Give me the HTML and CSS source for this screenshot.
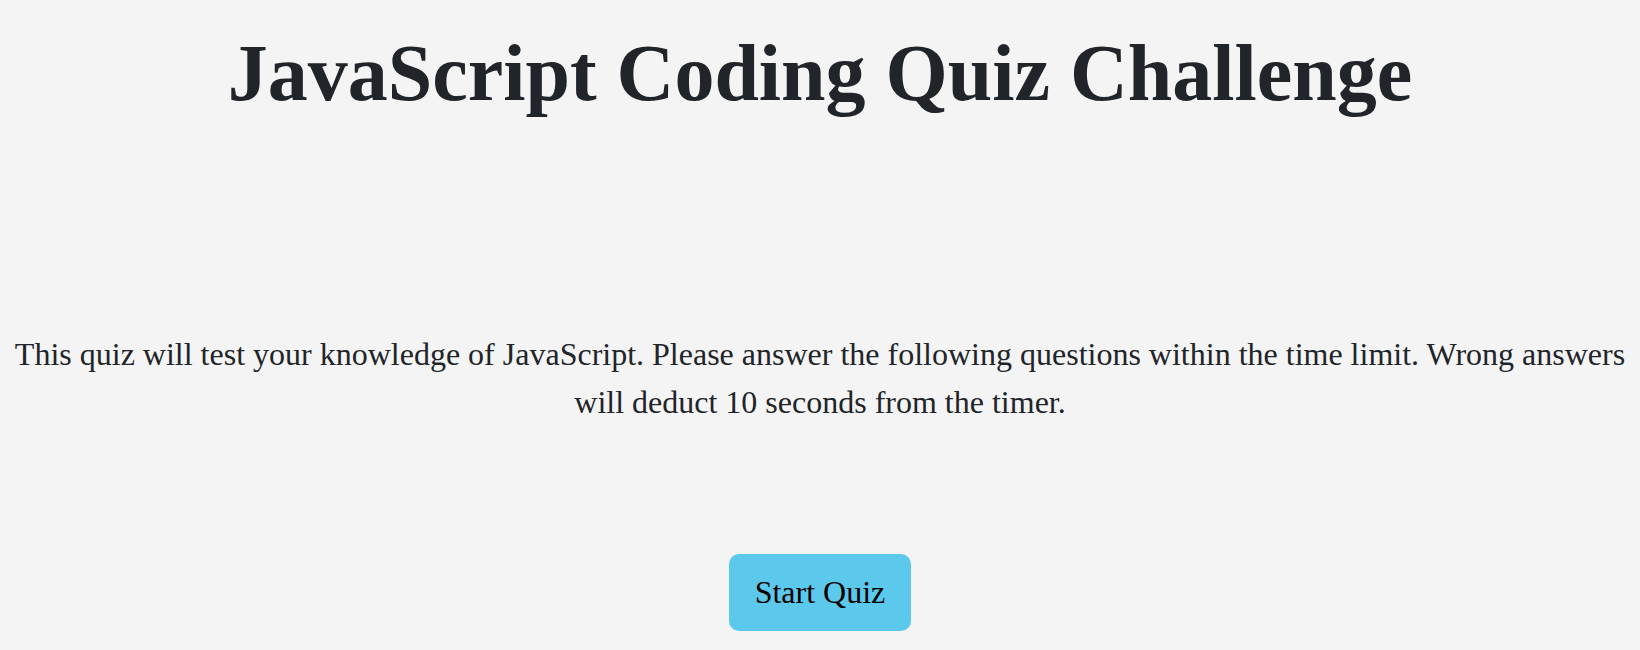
FILE: index.html
```html
<!DOCTYPE html>
<html lang="en">
<head>
<meta charset="utf-8">
<title>JavaScript Coding Quiz Challenge</title>
<link rel="stylesheet" href="styles.css">
</head>
<body>
<main class="quiz">
  <h1 class="quiz-title">JavaScript Coding Quiz Challenge</h1>
  <p class="quiz-intro">This quiz will test your knowledge of JavaScript. Please answer the following questions within the time limit. Wrong answers will deduct 10 seconds from the timer.</p>
  <button class="start-btn" type="button">Start Quiz</button>
</main>
</body>
</html>
```

FILE: styles.css
```css
html, body {
  margin: 0;
  padding: 0;
  background: #f4f4f4;
}

body {
  font-family: "Liberation Serif", "Times New Roman", serif;
  color: #212529;
}

.quiz {
  display: flex;
  flex-direction: column;
  align-items: center;
  padding: 28px 8px 0;
  text-align: center;
}

.quiz-title {
  margin: 0;
  font-size: 80px;
  font-weight: bold;
  line-height: normal;
}

.quiz-intro {
  margin: 211px 0 0;
  font-size: 32px;
  line-height: 48px;
}

.start-btn {
  margin-top: 128px;
  padding: 20px 26px;
  font-family: "Liberation Serif", "Times New Roman", serif;
  font-size: 32px;
  line-height: normal;
  color: #000;
  background: #5bc8ec;
  border: none;
  border-radius: 10px;
}
```
